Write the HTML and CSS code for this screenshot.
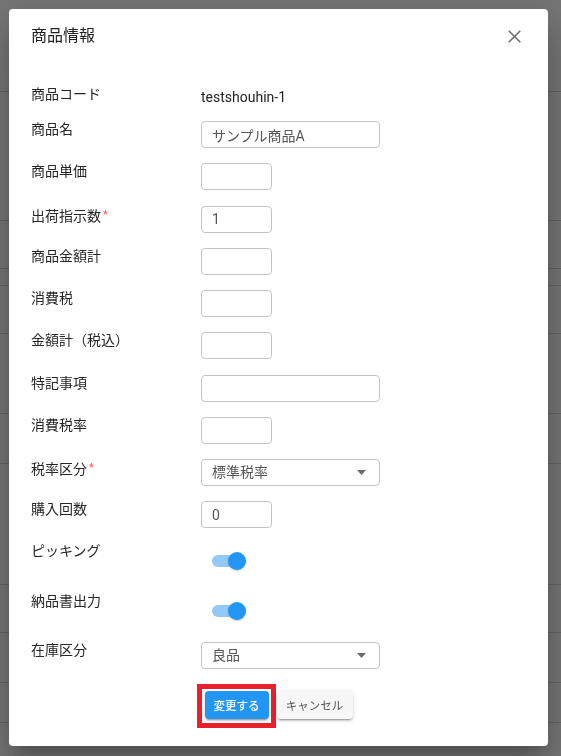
FILE: index.html
```html
<!DOCTYPE html>
<html lang="ja">
<head>
<meta charset="utf-8">
<title>商品情報</title>
<link rel="stylesheet" href="styles.css">
</head>
<body>
<div class="page">
  <div class="page-row h92"></div>
  <div class="page-row h129"></div>
  <div class="page-row h48"></div>
  <div class="page-row h17"></div>
  <div class="page-row h48"></div>
  <div class="page-row h80"></div>
  <div class="page-row h50"></div>
  <div class="page-row h121"></div>
  <div class="page-row h48"></div>
  <div class="page-row h50"></div>
  <div class="page-row h40"></div>
</div>
<div class="overlay">
  <div class="dialog">
    <div class="dialog-header">
      <span class="dialog-title">商品情報</span>
      <span class="close" aria-label="閉じる">
        <svg width="13" height="13" viewBox="0 0 13 13"><path d="M0.7 0.7 L12.3 12.3 M12.3 0.7 L0.7 12.3" stroke="#6f6f6f" stroke-width="1.6" fill="none"/></svg>
      </span>
    </div>
    <div class="form">
      <div class="row row-text"><div class="label">商品コード</div><div class="value">testshouhin-1</div></div>
      <div class="row"><div class="label">商品名</div><input class="input wide" type="text" value="サンプル商品A"></div>
      <div class="row"><div class="label">商品単価</div><input class="input small" type="text" value=""></div>
      <div class="row"><div class="label">出荷指示数<span class="req">*</span></div><input class="input small" type="text" value="1"></div>
      <div class="row"><div class="label">商品金額計</div><input class="input small" type="text" value=""></div>
      <div class="row"><div class="label">消費税</div><input class="input small" type="text" value=""></div>
      <div class="row"><div class="label">金額計（税込）</div><input class="input small" type="text" value=""></div>
      <div class="row"><div class="label">特記事項</div><input class="input wide" type="text" value=""></div>
      <div class="row"><div class="label">消費税率</div><input class="input small" type="text" value=""></div>
      <div class="row"><div class="label">税率区分<span class="req">*</span></div>
        <div class="input wide select"><span>標準税率</span><svg class="caret" width="9" height="5" viewBox="0 0 9 5"><path d="M0 0 H9 L4.5 5 Z" fill="#6b6b6b"/></svg></div>
      </div>
      <div class="row"><div class="label">購入回数</div><input class="input small" type="text" value="0"></div>
      <div class="row row-switch"><div class="label">ピッキング</div><div class="switch"><span class="track"></span><span class="thumb"></span></div></div>
      <div class="row row-switch"><div class="label">納品書出力</div><div class="switch"><span class="track"></span><span class="thumb"></span></div></div>
      <div class="row"><div class="label">在庫区分</div>
        <div class="input wide select"><span>良品</span><svg class="caret" width="9" height="5" viewBox="0 0 9 5"><path d="M0 0 H9 L4.5 5 Z" fill="#6b6b6b"/></svg></div>
      </div>
    </div>
    <div class="actions">
      <button class="btn btn-primary" type="button">変更する<span class="highlight"></span></button>
      <button class="btn btn-cancel" type="button">キャンセル</button>
    </div>
  </div>
</div>
</body>
</html>
```
FILE: styles.css
```css
html, body {
  margin: 0;
  height: 100%;
}
body {
  font-family: Roboto, "Noto Sans CJK JP", sans-serif;
  color: #222;
  overflow: hidden;
}
.page {
  background: #fff;
  height: 756px;
}
.page-row {
  box-sizing: border-box;
  border-bottom: 1px solid #d6d6d6;
}
.h92 { height: 92px; }
.h129 { height: 129px; }
.h48 { height: 48px; }
.h17 { height: 17px; }
.h80 { height: 80px; }
.h50 { height: 50px; }
.h121 { height: 121px; }
.h40 { height: 40px; }

.overlay {
  position: fixed;
  inset: 0;
  background: rgba(0, 0, 0, 0.54);
  padding: 9px 13px 10px 9px;
  box-sizing: border-box;
  display: flex;
}
.dialog {
  flex: 1;
  background: #fff;
  border-radius: 4px;
  box-shadow: 0 11px 15px -7px rgba(0,0,0,.2), 0 24px 38px 3px rgba(0,0,0,.14), 0 9px 46px 8px rgba(0,0,0,.12);
  display: flex;
  flex-direction: column;
}
.dialog-header {
  display: flex;
  justify-content: space-between;
  align-items: center;
  height: 24px;
  padding: 15px 27px 0 22px;
}
.dialog-title {
  font-size: 16px;
  line-height: 24px;
  color: #222;
}
.close {
  display: flex;
  width: 13px;
  height: 13px;
}
.form {
  margin-top: 38px;
  padding: 0 22px;
}
.row {
  display: grid;
  grid-template-columns: 170px 1fr;
  align-items: start;
  margin-bottom: 15.22px;
}
.row-text {
  height: 20px;
}
.row-switch {
  height: 34px;
}
.label {
  font-size: 14px;
  line-height: 17px;
  color: #262626;
}
.req {
  color: #ff5252;
  font-size: 11px;
  vertical-align: 3px;
  margin-left: 2px;
}
.value {
  font-size: 14px;
  line-height: 20px;
  color: #222;
  padding-top: 1px;
}
.input {
  box-sizing: border-box;
  height: 27px;
  border: 1px solid #c4c4c4;
  border-radius: 4px;
  padding: 0 10px;
  font: inherit;
  font-size: 14px;
  color: #555;
  background: #fff;
  outline: none;
  margin: 0;
}
.small { width: 71px; }
.wide { width: 179px; }
.select {
  display: flex;
  align-items: center;
  justify-content: space-between;
  padding-right: 13px;
  line-height: 25px;
}
.caret {
  display: block;
}
.switch {
  position: relative;
  width: 46px;
  height: 34px;
  margin-left: 11px;
}
.track {
  position: absolute;
  left: 0;
  top: 12px;
  width: 30px;
  height: 12px;
  border-radius: 6px;
  background: #93c9f7;
}
.thumb {
  position: absolute;
  left: 16px;
  top: 9px;
  width: 18px;
  height: 18px;
  border-radius: 50%;
  background: #2196f3;
  box-shadow: 0 1px 2px rgba(0,0,0,.2);
}
.actions {
  display: flex;
  justify-content: center;
  gap: 8px;
  margin-top: 7px;
}
.btn {
  position: relative;
  box-sizing: border-box;
  height: 28px;
  border: none;
  border-radius: 4px;
  font-family: Roboto, "Noto Sans CJK JP", sans-serif;
  font-size: 11.5px;
  font-weight: 500;
  padding: 0;
  cursor: pointer;
  box-shadow: 0 3px 1px -2px rgba(0,0,0,.2), 0 2px 2px 0 rgba(0,0,0,.14), 0 1px 5px 0 rgba(0,0,0,.12);
}
.btn-primary {
  width: 64px;
  background: #2196f3;
  color: #fff;
}
.btn-cancel {
  width: 76px;
  background: #f7f7f7;
  color: #555;
  font-weight: 400;
}
.highlight {
  position: absolute;
  left: -8px;
  top: -7px;
  right: -7px;
  bottom: -9px;
  border: 5px solid #e8202a;
  box-sizing: border-box;
  pointer-events: none;
}
```
